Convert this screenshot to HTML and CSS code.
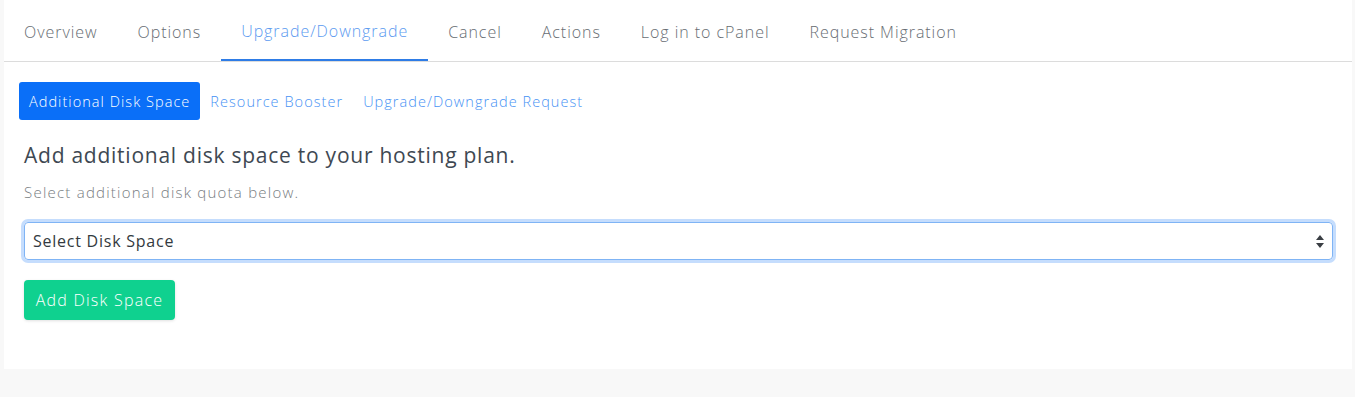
FILE: index.html
```html
<!DOCTYPE html>
<html>
<head>
<meta charset="utf-8">
<link rel="stylesheet" href="styles.css">
</head>
<body>
<div class="card">
  <nav class="tabs">
    <a class="tab">Overview</a>
    <a class="tab">Options</a>
    <a class="tab active">Upgrade/Downgrade</a>
    <a class="tab">Cancel</a>
    <a class="tab">Actions</a>
    <a class="tab">Log in to cPanel</a>
    <a class="tab">Request Migration</a>
  </nav>
  <div class="body">
    <div class="pills">
      <a class="pill active">Additional Disk Space</a>
      <a class="pill">Resource Booster</a>
      <a class="pill">Upgrade/Downgrade Request</a>
    </div>
    <div class="content">
      <h3 class="title">Add additional disk space to your hosting plan.</h3>
      <p class="sub">Select additional disk quota below.</p>
      <div class="select">
        <span>Select Disk Space</span>
        <svg class="arrows" width="8" height="13" viewBox="0 0 8 13"><path d="M4 0 L8 5 L0 5 Z M0 8 L8 8 L4 13 Z" fill="#3a3f44"/></svg>
      </div>
      <button class="btn">Add Disk Space</button>
    </div>
  </div>
</div>
</body>
</html>
```
FILE: styles.css
```css
html, body { margin: 0; padding: 0; }
body {
  background: #f8f8f8;
  font-family: "Open Sans", "Liberation Sans", sans-serif;
  height: 397px;
}
.card {
  margin-left: 4px;
  width: 1348px;
  height: 369px;
  background: #fff;
}
.tabs {
  display: flex;
  border-bottom: 1px solid #dcdcdc;
  height: 61px;
}
.tab {
  padding: 0 20px;
  font-size: 16px;
  font-weight: 300;
  letter-spacing: 0.95px;
  color: #676d73;
  display: flex;
  align-items: center;
  height: 61px;
  box-sizing: border-box;
  padding-top: 2px;
}
.tab.active {
  color: #5b9af0;
  border-bottom: 2px solid #2e7ce6;
}
.body {
  padding: 20px 15px 0 15px;
}
.pills {
  display: flex;
}
.pill {
  font-size: 14.5px;
  font-weight: 300;
  letter-spacing: 1.05px;
  color: #4792f4;
  padding: 0 10px;
  height: 38px;
  display: flex;
  align-items: center;
  border-radius: 3px;
}
.pill.active {
  background: #0a6ff8;
  color: #fff;
}
.content {
  padding: 0 5px;
}
.title {
  margin: 23px 0 0 0;
  font-weight: 400;
  font-size: 21px;
  letter-spacing: 0.75px;
  color: #3e4852;
  line-height: 25px;
}
.sub {
  margin: 14px 0 0 0;
  font-size: 15px;
  font-weight: 300;
  letter-spacing: 1.23px;
  color: #777c81;
  line-height: 20px;
}
.select {
  margin-top: 20px;
  height: 38px;
  box-sizing: border-box;
  border: 1px solid #7fb4f5;
  border-radius: 4px;
  box-shadow: 0 0 0 3px #c5ddfd;
  width: 1309px;
  display: flex;
  align-items: center;
  justify-content: space-between;
  padding: 0 8px 0 8px;
  font-size: 16px;
  letter-spacing: 0.76px;
  color: #333a40;
}
.btn {
  margin-top: 20px;
  background: #0fd18f;
  color: #fff;
  border: none;
  border-radius: 4px;
  font-family: inherit;
  font-size: 16px;
  font-weight: 300;
  letter-spacing: 1.25px;
  height: 40px;
  padding: 0;
  width: 151px;
  box-shadow: 0 1px 3px rgba(0,0,0,.12);
}
```
